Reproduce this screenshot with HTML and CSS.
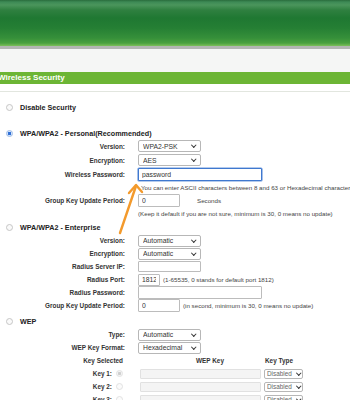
FILE: index.html
```html
<!DOCTYPE html>
<html>
<head>
    <title>Wireless Security</title>
    <link rel="stylesheet" href="styles.css">
</head>
<body>
    <div class="header"></div>
    <div class="strip"></div>
    <div class="title-bar">Wireless Security</div>

    <form class="content">
        <div class="option first">
            <input type="radio" name="security" id="secOff">
            <label for="secOff">Disable Security</label>
        </div>

        <!-- WPA personal -->
        <div class="option">
            <input type="radio" name="security" id="secPsk" checked>
            <label for="secPsk">WPA/WPA2 - Personal(Recommended)</label>
        </div>
        <div class="fields personal">
            <label>Version:</label>
            <span class="select"><select><option>WPA2-PSK</option></select></span>

            <label>Encryption:</label>
            <span class="select"><select><option>AES</option></select></span>

            <label>Wireless Password:</label>
            <input type="text" class="text wide focused" value="password">

            <span></span>
            <span class="note indent">You can enter ASCII characters between 8 and 63 or Hexadecimal characters between 8 and 64.</span>

            <label>Group Key Update Period:</label>
            <span class="inline"><input type="text" class="text short" value="0"><span class="note unit">Seconds</span></span>

            <span></span>
            <span class="note">(Keep it default if you are not sure, minimum is 30, 0 means no update)</span>
        </div>

        <!-- WPA enterprise -->
        <div class="option enterprise">
            <input type="radio" name="security" id="secEnt">
            <label for="secEnt">WPA/WPA2 - Enterprise</label>
        </div>
        <div class="fields enterprise-fields">
            <label>Version:</label>
            <span class="select"><select><option>Automatic</option></select></span>

            <label>Encryption:</label>
            <span class="select"><select><option>Automatic</option></select></span>

            <label>Radius Server IP:</label>
            <input type="text" class="text mid">

            <label>Radius Port:</label>
            <span class="inline"><input type="text" class="text port" value="1812"><span class="note">(1-65535, 0 stands for default port 1812)</span></span>

            <label>Radius Password:</label>
            <input type="text" class="text wide">

            <label>Group Key Update Period:</label>
            <span class="inline"><input type="text" class="text short" value="0"><span class="note">(in second, minimum is 30, 0 means no update)</span></span>
        </div>

        <!-- WEP -->
        <div class="option wep">
            <input type="radio" name="security" id="secWep">
            <label for="secWep">WEP</label>
        </div>
        <div class="fields wep-fields">
            <label>Type:</label>
            <span class="select"><select><option>Automatic</option></select></span>

            <label>WEP Key Format:</label>
            <span class="select"><select><option>Hexadecimal</option></select></span>
        </div>
        <div class="keys">
            <span class="key-label">Key Selected</span>
            <span class="key-head">WEP Key</span>
            <span class="type-head">Key Type</span>

            <span class="key-label">Key 1: <input type="radio" name="key" checked disabled></span>
            <input type="text" class="key-input" disabled>
            <span class="select small"><select disabled><option>Disabled</option></select></span>

            <span class="key-label">Key 2: <input type="radio" name="key" disabled></span>
            <input type="text" class="key-input" disabled>
            <span class="select small"><select disabled><option>Disabled</option></select></span>

            <span class="key-label">Key 3: <input type="radio" name="key" disabled></span>
            <input type="text" class="key-input" disabled>
            <span class="select small"><select disabled><option>Disabled</option></select></span>
        </div>
    </form>

    <svg class="arrow" width="350" height="400" viewBox="0 0 350 400">
        <path d="M120 233 L136 186" />
        <path d="M129 193 L136 185 L142 192" />
    </svg>
</body>
</html>
```

FILE: styles.css
```css
html, body {
    margin: 0;
    overflow: hidden;
}

body {
    position: relative;
    width: 350px;
    height: 400px;
    background-color: #fff;
    font-family: "Liberation Sans", Arial, sans-serif;
    color: #333;
}

.header {
    height: 46px;
    background: linear-gradient(to bottom, #2a6c3c 0, #3d8a55 2px, #4b955c 5px, #2f8040 10px, #1f7832 18px, #257f34 28px, #36903a 38px, #4aa03e 43px, #7cbf5a 46px);
    border-bottom: 3px solid #b3b5b2;
}

.strip {
    height: 23px;
    background-color: #f5f6f5;
}

.title-bar {
    height: 12px;
    line-height: 12px;
    background-color: #6cb535;
    color: #fff;
    font-size: 8px;
    font-weight: bold;
    text-indent: -2px;
    white-space: nowrap;
}

.content {
    margin: 7px 0 0 0;
    padding-top: 9px;
    border-top: 1px solid #e2e6df;
}

.option {
    display: flex;
    align-items: center;
    gap: 7px;
    height: 12px;
    padding-left: 6px;
    font-size: 7.2px;
    font-weight: bold;
    color: #222;
    white-space: nowrap;
}

.option.first {
    margin-bottom: 14px;
}

.option.enterprise {
    margin-top: 1px;
}

.option.wep {
    margin-top: 3px;
}

input[type="radio"] {
    appearance: none;
    -webkit-appearance: none;
    box-sizing: border-box;
    width: 7px;
    height: 7px;
    margin: 0;
    border: 1px solid #c6c6c6;
    border-radius: 50%;
    background-color: #fafafa;
}

input[type="radio"]:checked {
    border-color: #9fbde8;
    background: radial-gradient(circle, #2f6fd6 0, #2f6fd6 1.4px, #d6e4f8 2px);
}

input[type="radio"]:disabled {
    border-color: #e2e2e2;
    background: #fbfbfb;
}

input[type="radio"]:checked:disabled {
    background: radial-gradient(circle, #cfcfcf 0, #cfcfcf 1.3px, #f4f4f4 2px);
}

.fields {
    display: grid;
    grid-template-columns: 125px auto;
    column-gap: 13px;
    grid-auto-rows: 13px;
    align-items: center;
    white-space: nowrap;
}

.fields label {
    text-align: right;
    font-size: 6.4px;
    font-weight: bold;
    color: #333;
}

.personal {
    grid-template-rows: 14px 14px 14px 13px 13px 13px;
}

.enterprise-fields {
    padding-top: 1px;
}

.wep-fields {
    padding-top: 1px;
}

.select {
    position: relative;
    display: block;
    width: 63px;
    height: 12px;
}

.select::after {
    content: "";
    position: absolute;
    right: 6px;
    top: 3px;
    width: 2.5px;
    height: 2.5px;
    border-right: 1.3px solid #333;
    border-bottom: 1.3px solid #333;
    transform: rotate(45deg);
    pointer-events: none;
}

select {
    appearance: none;
    -webkit-appearance: none;
    display: block;
    box-sizing: border-box;
    width: 100%;
    height: 100%;
    margin: 0;
    padding: 0 0 0 4px;
    border: 1px solid #b7b7b7;
    border-radius: 2px;
    background-color: #fff;
    font-family: "Liberation Sans", Arial, sans-serif;
    font-size: 6.8px;
    color: #333;
}

.text {
    box-sizing: border-box;
    height: 13px;
    margin: 0;
    padding: 0 3px;
    border: 1px solid #bcbcbc;
    border-radius: 1px;
    background-color: #fff;
    font-family: "Liberation Sans", Arial, sans-serif;
    font-size: 6.8px;
    color: #333;
}

.wide {
    width: 124px;
}

.mid {
    width: 63px;
    height: 11px;
}

.short {
    width: 42px;
}

.port {
    width: 22px;
    height: 12px;
}

.focused {
    border-color: #3f78cf;
    box-shadow: 0 0 0 0.6px #6b98dc;
}

.inline {
    display: flex;
    align-items: center;
    gap: 3px;
}

.note {
    font-size: 6.2px;
    color: #444;
}

.indent {
    padding-left: 3px;
}

.unit {
    margin-left: 14px;
}

.keys {
    display: grid;
    grid-template-columns: 140px 124px auto;
    grid-auto-rows: 13px;
    align-items: center;
    white-space: nowrap;
    font-size: 6.4px;
    font-weight: bold;
}

.key-label {
    display: flex;
    justify-content: flex-end;
    align-items: center;
    gap: 4px;
    padding-right: 17px;
}

.key-head {
    padding-left: 56px;
}

.type-head {
    padding-left: 1px;
}

.key-input {
    box-sizing: border-box;
    width: 121px;
    height: 10px;
    margin: 0;
    border: 1px solid #e1e1e1;
    border-radius: 1px;
    background-color: #f4f4f4;
}

.select.small {
    width: 39px;
    height: 10px;
}

.select.small::after {
    right: 3px;
    top: 2px;
}

.select.small select {
    padding-left: 2px;
    font-size: 6.4px;
    color: #666;
    font-weight: normal;
    opacity: 1;
}

.arrow {
    position: absolute;
    top: 0;
    left: 0;
    pointer-events: none;
    fill: none;
    stroke: #f39a2c;
    stroke-width: 2.4;
    stroke-linecap: round;
    stroke-linejoin: round;
}
```
